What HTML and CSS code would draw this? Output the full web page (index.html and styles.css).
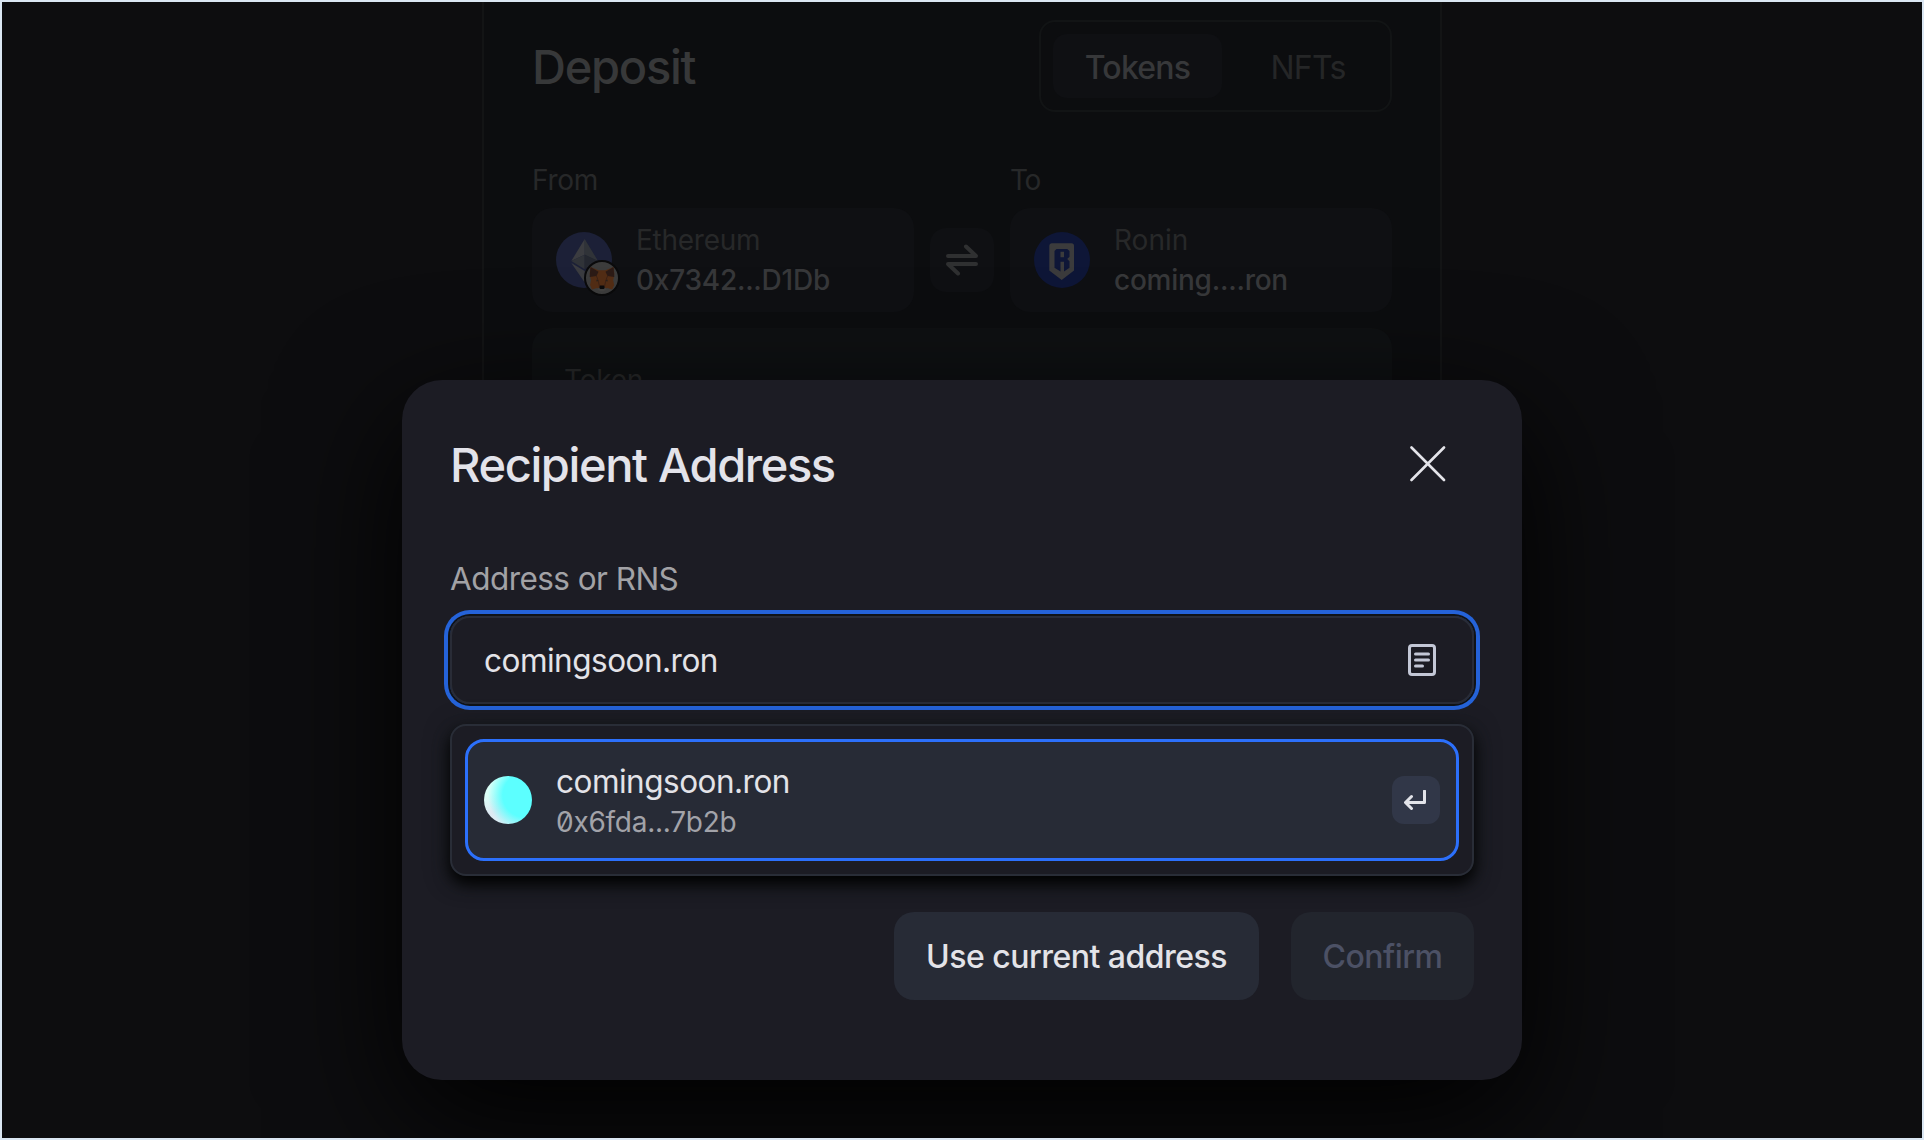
FILE: index.html
```html
<!DOCTYPE html>
<html lang="en">
<head>
<meta charset="utf-8">
<title>Recipient Address</title>
<link rel="stylesheet" href="styles.css">
</head>
<body>
<div class="frame">
  <main class="panel">
    <header class="panel-head">
      <h1 class="panel-title">Deposit</h1>
      <nav class="tabs">
        <span class="tab tab-active">Tokens</span>
        <span class="tab">NFTs</span>
      </nav>
    </header>
    <section class="route">
      <div class="side">
        <span class="side-label">From</span>
        <div class="wallet">
          <span class="chain">
            <svg width="56" height="56" viewBox="0 0 56 56"><circle cx="28" cy="28" r="28" fill="#1c2037"/><path d="M28.7 7 15.3 29l13.4-6.2z" fill="#3b3c40"/><path d="M28.7 7v15.8L42 29z" fill="#303338"/><path d="M15.3 29l13.4-6.2v14.4z" fill="#303338"/><path d="M42 29l-13.3-6.2v14.4z" fill="#24272f"/><path d="M15.3 31l13.4 8v11.5z" fill="#3b3c40"/><path d="M42 31l-13.3 8v11.5z" fill="#303338"/></svg>
            <svg class="badge" width="36" height="36" viewBox="0 0 36 36"><circle cx="18" cy="18" r="17" fill="#3c3c3c" stroke="#0a0a0b" stroke-width="2"/><path d="M6.500 7l8 3.200h7L29.500 7l.9 7-1.200 6.500 1 4.500-2 4.500-5-1.500-3 1.700h-4.200l-3-1.700-5 1.500-2-4.500 1-4.500L5.700 14z" fill="#522d15"/><path d="M6.500 7l8 4.800-2 4.200-6.800 1z" fill="#2c1b16"/><path d="M29.500 7l-8 4.800 2 4.200 6.800 1z" fill="#2c1b16"/><path d="M12.500 16l2 5.500 1 5.500M23.500 16l-2 5.500-1 5.500" stroke="#3c2215" fill="none"/><path d="M12.500 19.500l2 1.500-2 .5zM23.500 19.500l-2 1.500 2 .5z" fill="#20201f"/><path d="M13 29l3-1.700h4l3 1.700-3 2.200h-4z" fill="#424140"/><path d="M16 25.500h4l.7 2.500-1 1h-3.400l-1-1z" fill="#0b0b0c"/></svg>
          </span>
          <div class="wallet-text"><span class="network">Ethereum</span><span class="address">0x7342...D1Db</span></div>
        </div>
      </div>
      <span class="swap">
        <svg width="32" height="32" viewBox="0 0 32 32" fill="none" stroke="#2f3031" stroke-width="4" stroke-linecap="round" stroke-linejoin="round"><path d="M2 12h28L20 2.500M30 20H2l10 9.500"/></svg>
      </span>
      <div class="side">
        <span class="side-label side-label-to">To</span>
        <div class="wallet">
          <span class="chain">
            <svg width="56" height="56" viewBox="0 0 56 56"><circle cx="28" cy="28" r="28" fill="#0e1637"/><path fill="#3b3b3c" d="M18 11.300h19.500a2.500 2.500 0 0 1 2.500 2.500V38.500L27.700 48 15.300 38.500V13.800a2.500 2.500 0 0 1 2.700-2.500z"/><path fill-rule="evenodd" fill="#0e1637" d="M20.500 19l2-2h10.700l2.300 2v5.800L33.200 27l2.300 2.200v6.600L30 39.500v-9.800h-3.500v9.800l-6-3.700zM26.500 19.800v5.400H30v-5.400z"/></svg>
          </span>
          <div class="wallet-text"><span class="network network-ronin">Ronin</span><span class="address">coming....ron</span></div>
        </div>
      </div>
    </section>
    <section class="token-card">Token</section>
  </main>

  <div class="modal">
    <header class="modal-head">
      <h2 class="modal-title">Recipient Address</h2>
      <span class="close"><svg width="36" height="36" viewBox="0 0 36 36" stroke="#e4e4ea" stroke-width="2.600" stroke-linecap="round"><path d="M1.500 1.500l32.500 32.500M34 1.500l-32.500 32.500"/></svg></span>
    </header>
    <span class="field-label">Address or RNS</span>
    <div class="field">
      <div class="input">
        <span class="input-value">comingsoon.ron</span>
        <svg width="28" height="32" viewBox="0 0 28 32" fill="none"><rect x="1.500" y="1.500" width="25" height="29" rx="2.500" stroke="#c3c7d6" stroke-width="3"/><path d="M7.500 10h13M7.500 16h13M7.500 22h7" stroke="#c3c7d6" stroke-width="3" stroke-linecap="round"/></svg>
      </div>
      <div class="dropdown">
        <div class="option">
          <span class="avatar"></span>
          <div class="option-text"><span class="option-name">comingsoon.ron</span><span class="option-address">0x6fda...7b2b</span></div>
          <span class="enter-key"><svg width="24" height="20" viewBox="0 0 24 20" fill="none" stroke="#e2e3e9" stroke-width="3" stroke-linejoin="round" stroke-linecap="round"><path d="M20.500 1v11.500H2.500M7.500 6.500l-6 6 6 6"/></svg></span>
        </div>
      </div>
    </div>
    <footer class="actions">
      <span class="button">Use current address</span>
      <span class="button button-disabled">Confirm</span>
    </footer>
  </div>
</div>
</body>
</html>
```
FILE: styles.css
```css
* { box-sizing: border-box; }

body {
  margin: 0;
  background: #0d0e0f;
  font-family: Inter, "Liberation Sans", sans-serif;
  font-size: 28px;
  line-height: 40px;
  letter-spacing: -0.25px;
}

h1, h2 { margin: 0; font-weight: 500; }
svg { display: block; flex: none; }
span { white-space: nowrap; }

.frame {
  position: relative;
  width: 1924px;
  height: 1140px;
  border: 2px solid #dbe7f3;
  background: #0d0d0f;
  overflow: hidden;
}

.panel {
  width: 960px;
  height: 900px;
  margin: 0 auto;
  padding: 18px 48px 0;
  border: 2px solid #131415;
  border-width: 0 2px;
  background: #0c0d0f;
}

.panel-head {
  display: flex;
  justify-content: space-between;
  align-items: center;
  height: 92px;
  margin-bottom: 48px;
}

.panel-title {
  padding-top: 2px;
  font-size: 47px;
  line-height: 60px;
  letter-spacing: -1.25px;
  color: #373839;
}

.tabs {
  display: flex;
  gap: 16px;
  height: 92px;
  padding: 12px;
  border: 2px solid #121415;
  border-radius: 16px;
}

.tab {
  display: flex;
  justify-content: center;
  align-items: center;
  width: 140px;
  height: 64px;
  padding-top: 3px;
  border-radius: 14px;
  font-size: 32px;
  letter-spacing: -0.75px;
  color: #252627;
}

.tab-active {
  width: 169px;
  background: #0f1013;
  color: #37383a;
  font-weight: 500;
}

.route {
  display: flex;
  justify-content: space-between;
  align-items: flex-end;
}

.side { display: flex; flex-direction: column; gap: 8px; }
.side-label { color: #272829; }
.side-label-to { letter-spacing: -1.5px; }

.wallet {
  display: flex;
  align-items: center;
  gap: 24px;
  width: 382px;
  height: 104px;
  padding: 0 24px;
  border-radius: 20px;
  background: #0f1013;
}

.chain { position: relative; }
.badge { position: absolute; left: 28px; top: 28px; }
.wallet-text { display: flex; flex-direction: column; }
.network { color: #272829; }
.network-ronin { letter-spacing: 0; }
.address { color: #37383a; font-weight: 500; }

.swap {
  display: flex;
  justify-content: center;
  align-items: center;
  width: 64px;
  height: 64px;
  margin-bottom: 20px;
  border-radius: 16px;
  background: #0f1013;
}

.token-card {
  height: 300px;
  margin-top: 16px;
  padding: 32px;
  border-radius: 20px;
  background: #0f1113;
  color: #28292a;
}

.modal {
  position: absolute;
  left: 400px;
  top: 378px;
  display: flex;
  flex-direction: column;
  width: 1120px;
  height: 700px;
  padding: 48px;
  border-radius: 40px;
  background: #1c1c24;
  box-shadow: 0 40px 128px #000;
}

.modal-head {
  display: flex;
  justify-content: space-between;
  align-items: center;
  height: 72px;
  margin-bottom: 55px;
}

.modal-title {
  padding-top: 2px;
  font-size: 47px;
  line-height: 60px;
  letter-spacing: -1.38px;
  color: #e3e3ea;
}

.close {
  display: flex;
  justify-content: center;
  align-items: center;
  width: 93px;
  height: 72px;
}

.field-label {
  margin-bottom: 13px;
  font-size: 31.5px;
  line-height: 48px;
  letter-spacing: -0.55px;
  color: #a2a2a6;
}

.field { position: relative; }

.input {
  display: flex;
  justify-content: space-between;
  align-items: center;
  height: 88px;
  padding: 0 36px 0 32px;
  border: 2px solid #292c37;
  border-radius: 20px;
  box-shadow: 0 0 0 2px #101317, 0 0 0 6px #2563d9;
  color: #e3e3e8;
}

.input-value {
  padding-top: 2px;
  font-size: 31.5px;
  letter-spacing: -0.5px;
}

.dropdown {
  position: absolute;
  left: 0;
  top: 108px;
  width: 1024px;
  height: 152px;
  padding: 13px;
  border: 2px solid #292d37;
  border-radius: 16px;
  background: #1c1c24;
  box-shadow: 0 8px 16px #000, 0 4px 24px rgba(20, 26, 26, .6);
}

.option {
  display: flex;
  align-items: center;
  height: 122px;
  padding: 0 16px;
  border: 3px solid #2c70fb;
  border-radius: 19px;
  background: #272b36;
}

.avatar {
  width: 48px;
  height: 48px;
  margin-right: 24px;
  border-radius: 50%;
  background:
    radial-gradient(circle at 85% 40%, #5cffff 44%, rgba(92, 255, 255, 0) 74%),
    linear-gradient(160deg, #dcfff8 30%, #dde9f2 60%, #d6f2f8);
}

.option-text { display: flex; flex: 1; flex-direction: column; padding-top: 4px; }
.option-name { font-size: 31.5px; letter-spacing: -0.5px; color: #e3e3e8; }
.option-address { color: #a2a3a9; font-feature-settings: "zero"; }

.enter-key {
  display: flex;
  justify-content: center;
  align-items: center;
  width: 48px;
  height: 48px;
  border-radius: 12px;
  background: #313748;
}

.actions {
  display: flex;
  justify-content: flex-end;
  gap: 32px;
  margin-top: 208px;
}

.button {
  display: flex;
  justify-content: center;
  align-items: center;
  width: 365px;
  height: 88px;
  padding-top: 2px;
  border-radius: 20px;
  background: #272b36;
  font-size: 32px;
  font-weight: 500;
  letter-spacing: -0.52px;
  color: #e3e3e8;
}

.button-disabled { width: 183px; background: #22252d; color: #4c5165; }
```
